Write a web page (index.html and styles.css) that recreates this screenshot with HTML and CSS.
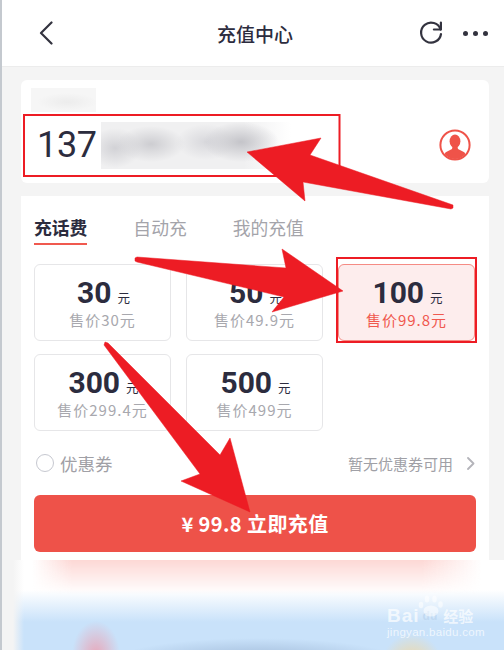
FILE: index.html
```html
<!DOCTYPE html>
<html lang="zh-CN">
  <head>
    <meta charset="UTF-8" />
    <meta name="viewport" content="width=device-width, initial-scale=1.0" />
    <title>充值中心</title>
    <link rel="stylesheet" href="styles.css">
  </head>
  <body>
    <div class="page">
      <header class="topbar">
        <svg class="back" width="14" height="24" viewBox="0 0 14 24">
          <path d="M12.5 1.5 2 12l10.5 10.5" />
        </svg>
        <h1>充值中心</h1>
        <svg class="refresh" width="26" height="26" viewBox="0 0 26 26">
          <path d="M22.6 9.5A10 10 0 1 0 23 14" />
          <path d="M22.9 2.5v7h-7" />
        </svg>
        <div class="dots"><i></i><i></i><i></i></div>
      </header>

      <main>
        <section class="card phone-card">
          <div class="blur-label"></div>
          <div class="phone-row">
            <span class="phone-num">137</span>
            <span class="blur-num"></span>
            <svg class="user" width="32" height="32" viewBox="0 0 32 32">
              <circle cx="16" cy="16" r="14.6" fill="none" stroke="#ef5349" stroke-width="2" />
              <ellipse cx="16" cy="12.2" rx="5.4" ry="6.7" fill="#ef5349" />
              <path d="M13.6 17.5h4.8l.6 2.6 6.3 3.2c.6.5.9 1.2 1 2A14 14 0 0 1 16 30 14 14 0 0 1 5.700 25.300c.1-.8.4-1.500 1-2l6.300-3.200z" fill="#ef5349" />
            </svg>
          </div>
        </section>

        <section class="card recharge-card">
          <nav class="tabs">
            <span class="tab valgt">充话费</span>
            <span class="tab">自动充</span>
            <span class="tab">我的充值</span>
          </nav>

          <div class="options">
            <div class="option">
              <p class="amount">30<small>元</small></p>
              <p class="price">售价30元</p>
            </div>
            <div class="option">
              <p class="amount">50<small>元</small></p>
              <p class="price">售价49.9元</p>
            </div>
            <div class="option selected">
              <p class="amount">100<small>元</small></p>
              <p class="price">售价99.8元</p>
            </div>
            <div class="option">
              <p class="amount">300<small>元</small></p>
              <p class="price">售价299.4元</p>
            </div>
            <div class="option">
              <p class="amount">500<small>元</small></p>
              <p class="price">售价499元</p>
            </div>
          </div>

          <div class="coupon">
            <span class="radio"></span>
            <span class="coupon-name">优惠券</span>
            <span class="coupon-note">暂无优惠券可用</span>
            <svg class="more" width="8" height="13" viewBox="0 0 8 13">
              <path d="M1 1l5.500 5.500L1 12" />
            </svg>
          </div>

          <button class="pay">¥ 99.8 立即充值</button>
        </section>

        <div class="blurred"></div>
      </main>

      <svg class="marks" width="504" height="650" viewBox="0 0 504 650">
        <rect x="24" y="115" width="315.500" height="61" />
        <rect x="337" y="258" width="139" height="84" />
        <path class="arrow" d="M247 152 321 138 310 155 453 205 453 208 451 209 303 182 305 201z" />
        <path class="arrow" d="M135 258 137 257 286 268 282 249 343 291 272 312 284 297 137 262 135 261z" />
        <path class="arrow" d="M250 512 181 481 200 474 104 345 105 342 108 343 220 455 230 438z" />
      </svg>

      <div class="watermark">
        <svg class="paw" width="28" height="24" viewBox="0 0 28 24">
          <ellipse cx="14" cy="17" rx="7.500" ry="5.500" />
          <ellipse cx="4" cy="11" rx="2.300" ry="3.300" />
          <ellipse cx="10" cy="5" rx="2.300" ry="3.600" />
          <ellipse cx="17.500" cy="5" rx="2.300" ry="3.600" />
          <ellipse cx="23.500" cy="10.500" rx="2.300" ry="3.300" />
        </svg>
        <p class="wm-brand">Bai<span class="wm-du">du</span><span class="wm-cn">经验</span></p>
        <p class="wm-url">jingyan.baidu.com</p>
      </div>
    </div>
  </body>
</html>
```

FILE: styles.css
```css
* {
  margin: 0px;
  box-sizing: border-box;
}

html,
body {
  height: 100%;
  overflow: hidden;
}

body {
  font-family: "Noto Sans CJK SC", "Noto Sans", sans-serif;
  color: #2c2c3e;
}

.page {
  position: relative;
  width: 504px;
  height: 650px;
  overflow: hidden;
  background-color: #f4f4f4;
  border-left: 2px solid #c4c9cf;
}

.topbar {
  display: flex;
  align-items: center;
  height: 67px;
  padding: 0px 15px 0px 37px;
  background-color: white;
  border-bottom: 1px solid #ececec;
}

.topbar h1 {
  margin-left: 164px;
  width: 78px;
  font-size: 19px;
  font-weight: 500;
  white-space: nowrap;
}

.back path,
.refresh path,
.more path {
  fill: none;
  stroke: #33333f;
  stroke-width: 2.2;
  stroke-linecap: round;
  stroke-linejoin: round;
}

.back {
  flex: none;
}

.refresh {
  margin-left: 123px;
  flex: none;
}

.dots {
  display: flex;
  gap: 5px;
  margin-left: 19px;
}

.dots i {
  width: 5px;
  height: 5px;
  border-radius: 50%;
  background-color: #33333f;
}

main {
  padding-top: 13px;
}

.card {
  width: 468px;
  margin-left: 19px;
  background-color: white;
}

.phone-card {
  height: 103px;
  margin-bottom: 13px;
  padding: 8px 18px 0px 10px;
  border-radius: 6px;
}

.blur-label {
  width: 65px;
  height: 24px;
  background: radial-gradient(ellipse 30px 9px at 36px 14px, #ececec, #f6f6f6);
}

.phone-row {
  display: flex;
  align-items: center;
  height: 48px;
  margin-top: 9px;
  padding-left: 6px;
}

.phone-num {
  width: 64px;
  font-family: Roboto, sans-serif;
  font-size: 36px;
  font-weight: 400;
  letter-spacing: -0.3px;
}

.blur-num {
  width: 190px;
  height: 47px;
  background:
    radial-gradient(ellipse 38px 20px at 140px 20px, #c4c4c9, rgba(196, 196, 201, 0)),
    radial-gradient(ellipse 34px 18px at 50px 22px, #cdcdd1, rgba(205, 205, 209, 0)),
    radial-gradient(ellipse 26px 20px at 14px 26px, #d2d2d6, rgba(210, 210, 214, 0)),
    radial-gradient(ellipse 30px 18px at 105px 20px, #d8d8dc, rgba(216, 216, 220, 0)),
    linear-gradient(to right, #f0f0f1 75%, white);
}

.user {
  margin-left: auto;
}

.recharge-card {
  height: 364px;
  padding: 19px 13px 0px;
}

.tabs {
  display: flex;
  gap: 46px;
}

.tab {
  padding-bottom: 4px;
  border-bottom: 2px solid transparent;
  font-size: 17.800px;
  line-height: 24px;
  color: #a4a4aa;
  white-space: nowrap;
}

.tab.valgt {
  font-weight: 700;
  color: #2c2c3e;
  border-bottom-color: #f0594f;
}

.options {
  display: grid;
  grid-template-columns: repeat(3, 137px);
  grid-auto-rows: 77px;
  column-gap: 15px;
  row-gap: 13px;
  margin-top: 19px;
}

.option {
  display: flex;
  flex-direction: column;
  align-items: center;
  justify-content: center;
  border: 1px solid #e6e6e8;
  border-radius: 6px;
}

.option.selected {
  background-color: #fdeded;
  border-color: #f58b84;
}

.amount {
  padding-left: 2px;
  font-family: Roboto, sans-serif;
  font-size: 30px;
  font-weight: 700;
  line-height: 34px;
}

.amount small {
  margin-left: 6px;
  font-family: "Noto Sans CJK SC", sans-serif;
  font-size: 12.500px;
  font-weight: 400;
  line-height: 0;
}

.price {
  font-size: 15px;
  line-height: 20px;
  letter-spacing: 1px;
  color: #a8a8ae;
  white-space: nowrap;
}

.selected .price {
  color: #f0594f;
}

.coupon {
  display: flex;
  align-items: center;
  height: 64px;
  padding-left: 2px;
}

.radio {
  width: 18px;
  height: 18px;
  border: 1.500px solid #c6c8d0;
  border-radius: 50%;
}

.coupon-name {
  margin-left: 6px;
  font-size: 17.500px;
  color: #a0a0a6;
}

.coupon-note {
  margin-left: auto;
  font-size: 15px;
  color: #a0a0a6;
}

.more {
  margin: 0px 1px 0px 14px;
}

.more path {
  stroke: #b4b4ba;
  stroke-width: 1.800;
}

.pay {
  display: block;
  width: 442px;
  height: 57px;
  border: 0px;
  border-radius: 6px;
  background-color: #ee5249;
  color: white;
  font-family: "Noto Sans CJK SC", sans-serif;
  font-size: 20px;
  font-weight: 700;
  letter-spacing: 0.4px;
}

.blurred {
  height: 90px;
  background:
    linear-gradient(to right, #f4f4f4 11px, rgba(244, 244, 244, 0) 22px),
    radial-gradient(ellipse 24px 34px at 94px 95px, #e8a8ba, rgba(232, 168, 186, 0)),
    radial-gradient(ellipse 150px 26px at 255px 104px, #98b2d2, rgba(152, 178, 210, 0)),
    radial-gradient(ellipse 30px 30px at 410px 104px, #f5d79a, rgba(245, 215, 154, 0)),
    linear-gradient(to bottom, rgba(201, 226, 250, 0) 30px, #c9e2fa 62px),
    white;
}

.blurred::before {
  content: "";
  display: block;
  height: 34px;
  background: linear-gradient(to right, rgba(253, 216, 213, 0) 30px, #fdd8d5 70px, #fdd8d5 420px, rgba(253, 216, 213, 0) 480px);
  -webkit-mask-image: linear-gradient(to bottom, black, transparent);
  mask-image: linear-gradient(to bottom, black, transparent);
}

.marks {
  position: absolute;
  left: -2px;
  top: 0px;
  pointer-events: none;
}

.marks rect {
  fill: none;
  stroke: #ed1c24;
  stroke-width: 2;
}

.marks .arrow {
  fill: #ed1c24;
  stroke: #ed1c24;
  stroke-width: 0.5;
  stroke-linejoin: round;
}

.watermark {
  position: absolute;
  left: 385px;
  top: 594px;
  width: 92px;
  color: rgba(255, 255, 255, 0.7);
  font-family: "Liberation Sans", sans-serif;
}

.paw {
  position: absolute;
  left: 30px;
  top: 0px;
  fill: rgba(255, 255, 255, 0.55);
}

.wm-brand {
  display: flex;
  align-items: center;
  padding-top: 12px;
  font-size: 19px;
  font-weight: 700;
  line-height: 20px;
  letter-spacing: 1px;
}

.wm-du {
  margin-left: 3px;
  font-size: 12px;
  letter-spacing: 0px;
  color: rgba(190, 215, 240, 0.9);
}

.wm-cn {
  margin-left: 6px;
  font-family: "Noto Sans CJK SC", sans-serif;
  font-size: 15px;
  letter-spacing: 0px;
}

.wm-url {
  font-size: 11.500px;
  line-height: 12px;
  letter-spacing: 0.3px;
  white-space: nowrap;
}
```
